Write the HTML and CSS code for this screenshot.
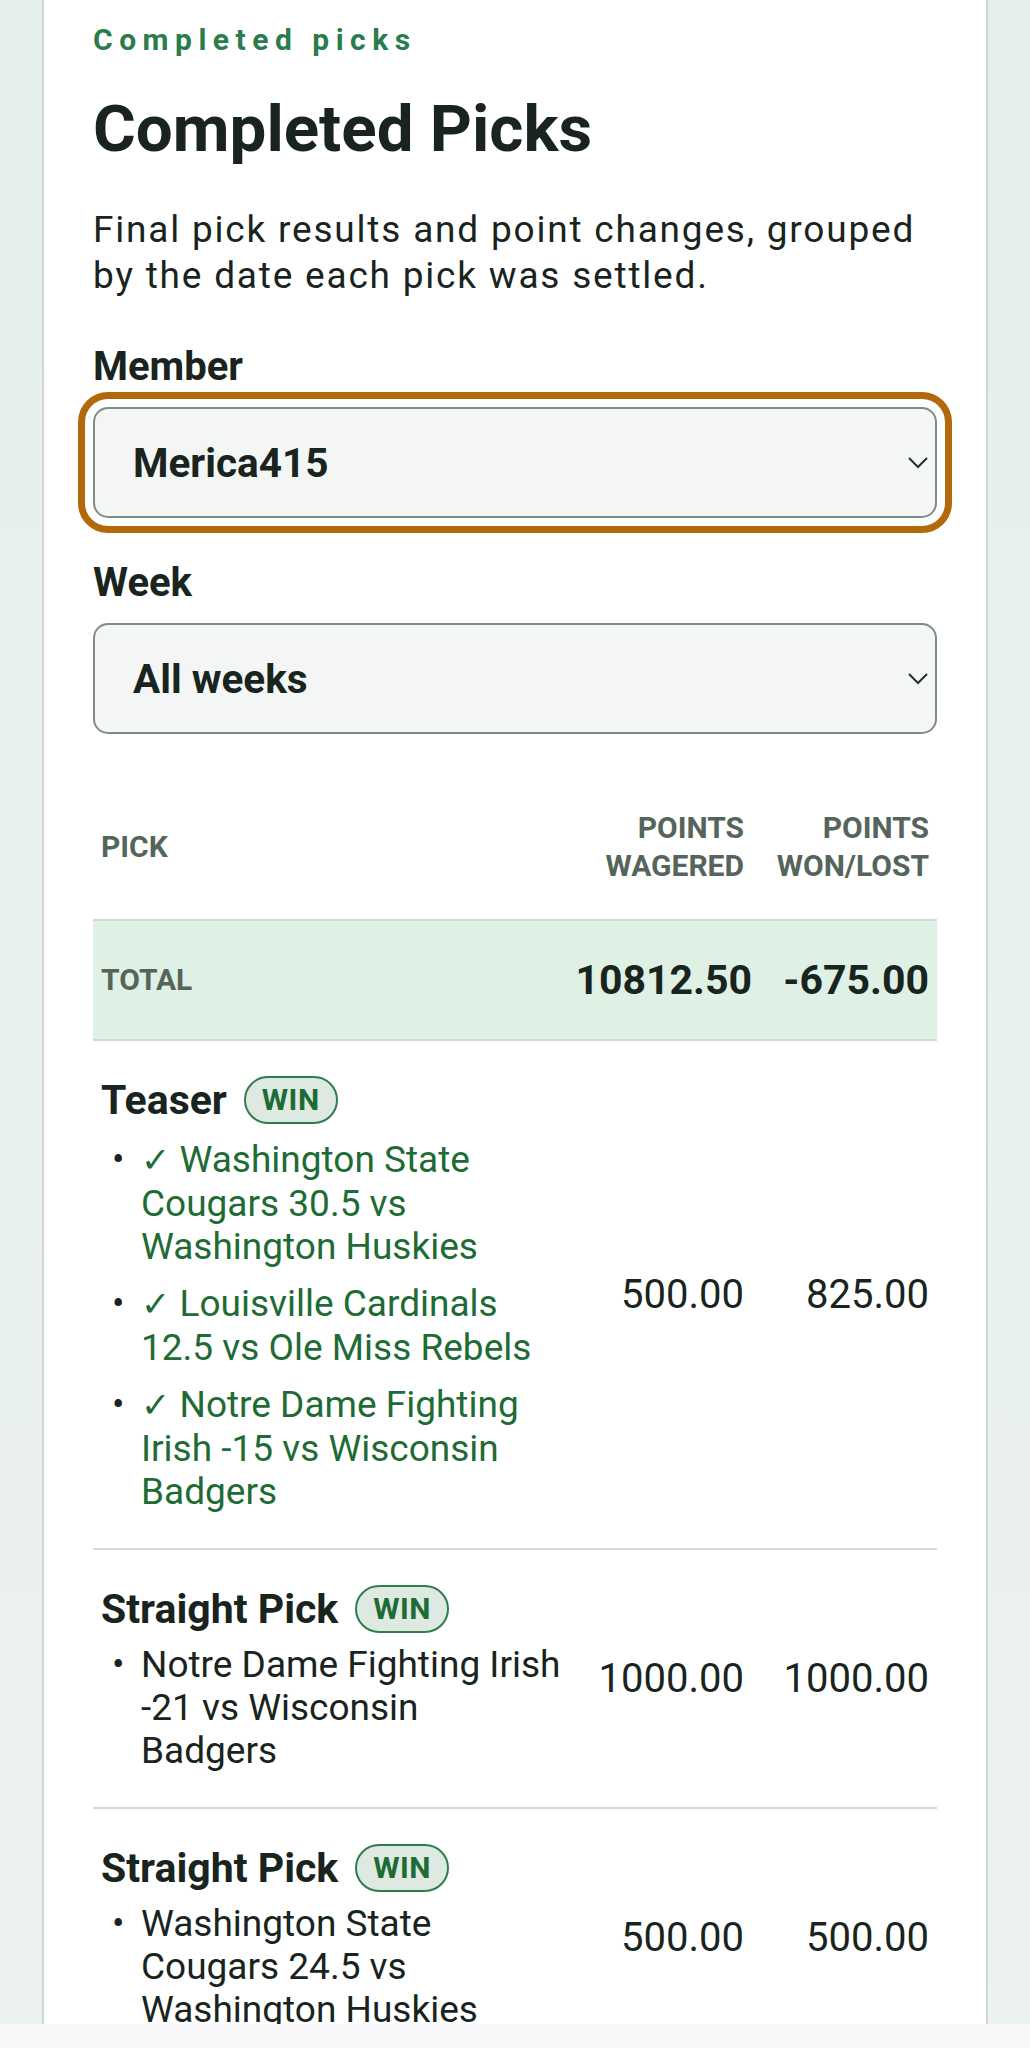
FILE: index.html
```html
<!DOCTYPE html>
<html lang="en">
<head>
  <meta charset="UTF-8" />
  <meta name="viewport" content="width=device-width, initial-scale=1.0"/>
  <title>Completed Picks</title>
  <link rel="stylesheet" href="styles.css">
</head>
<body>

  <main class="card">
    <p class="eyebrow">Completed picks</p>
    <h1>Completed Picks</h1>
    <p class="lede">Final pick results and point changes, grouped by the date each pick was settled.</p>

    <div class="field">
      <label for="member">Member</label>
      <div class="select-wrap">
        <select id="member" class="is-focused">
          <option>Merica415</option>
        </select>
        <svg class="chevron" width="20" height="12" viewBox="0 0 20 12"><path d="M1 1l9 9 9-9" fill="none" stroke="#27302b" stroke-width="2"/></svg>
      </div>
    </div>

    <div class="field">
      <label for="week">Week</label>
      <div class="select-wrap">
        <select id="week">
          <option>All weeks</option>
        </select>
        <svg class="chevron" width="20" height="12" viewBox="0 0 20 12"><path d="M1 1l9 9 9-9" fill="none" stroke="#27302b" stroke-width="2"/></svg>
      </div>
    </div>

    <table class="picks">
      <colgroup>
        <col class="col-pick">
        <col class="col-wager">
        <col class="col-result">
      </colgroup>
      <thead>
        <tr>
          <th class="pick-cell">Pick</th>
          <th class="num">Points<br>wagered</th>
          <th class="num last">Points<br>won/lost</th>
        </tr>
      </thead>
      <tbody>
        <tr class="total">
          <td class="pick-cell">Total</td>
          <td class="num wide">10812.50</td>
          <td class="num last">-675.00</td>
        </tr>
        <tr>
          <td class="pick-cell">
            <div class="pick-title">Teaser <span class="badge">WIN</span></div>
            <ul class="legs">
              <li class="won"><span><span class="check">✓</span> Washington State Cougars 30.5 vs Washington Huskies</span></li>
              <li class="won"><span><span class="check">✓</span> Louisville Cardinals 12.5 vs Ole Miss Rebels</span></li>
              <li class="won"><span><span class="check">✓</span> Notre Dame Fighting Irish -15 vs Wisconsin Badgers</span></li>
            </ul>
          </td>
          <td class="num">500.00</td>
          <td class="num last">825.00</td>
        </tr>
        <tr>
          <td class="pick-cell">
            <div class="pick-title">Straight Pick <span class="badge">WIN</span></div>
            <ul class="legs">
              <li><span>Notre Dame Fighting Irish -21 vs Wisconsin Badgers</span></li>
            </ul>
          </td>
          <td class="num">1000.00</td>
          <td class="num last">1000.00</td>
        </tr>
        <tr>
          <td class="pick-cell">
            <div class="pick-title">Straight Pick <span class="badge">WIN</span></div>
            <ul class="legs">
              <li><span>Washington State Cougars 24.5 vs Washington Huskies</span></li>
            </ul>
          </td>
          <td class="num">500.00</td>
          <td class="num last">500.00</td>
        </tr>
      </tbody>
    </table>
  </main>

  <div class="bottom-bar"></div>

</body>
</html>
```

FILE: styles.css
```css
:root {
  --text: #18241d;
  --muted: #56655c;
  --green: #2a7d4b;
  --leg-green: #1e6b36;
  --line: #d0dbd4;
  --field-bg: #f3f6f4;
  --field-border: #7f8d85;
  --focus: #b3680b;
  --total-bg: #dff0e5;
}

*, *::before, *::after { box-sizing: border-box; }

body {
  margin: 0;
  padding: 0 42px;
  background: linear-gradient(180deg, #e5efe9 0%, #edf3ef 100%);
  color: var(--text);
  font-family: Roboto, "Noto Sans", sans-serif;
}

.card {
  background: #fff;
  border: 2px solid #ccd8d1;
  border-top: none;
  padding: 22px 49px 60px;
}

.eyebrow {
  margin: 0;
  font-size: 30px;
  line-height: 36px;
  font-weight: 700;
  letter-spacing: 6.5px;
  color: var(--green);
}

h1 {
  margin: 32px 0 0;
  font-size: 65.5px;
  line-height: 77px;
  font-weight: 700;
}

.lede {
  margin: 40px 0 0;
  font-size: 37px;
  line-height: 46px;
  letter-spacing: 1.8px;
}

.field {
  margin-top: 45px;
}

.field + .field {
  margin-top: 42px;
}

label {
  display: block;
  font-size: 40px;
  line-height: 46px;
  font-weight: 700;
  margin-bottom: 17px;
}

.select-wrap {
  position: relative;
}

select {
  appearance: none;
  -webkit-appearance: none;
  display: block;
  width: 100%;
  height: 111px;
  padding: 0 60px 0 38px;
  border: 2px solid var(--field-border);
  border-radius: 15px;
  background: var(--field-bg);
  color: var(--text);
  font-family: inherit;
  font-size: 40.5px;
  font-weight: 700;
}

select.is-focused {
  outline: 7px solid var(--focus);
  outline-offset: 8px;
}

.chevron {
  position: absolute;
  right: 9px;
  top: 50%;
  margin-top: -6px;
  pointer-events: none;
}

.picks {
  width: 100%;
  margin-top: 40px;
  border-collapse: collapse;
  table-layout: fixed;
}

.col-pick { width: 468px; }
.col-wager { width: 192px; }

th, td {
  padding: 35px 9px 35px 9px;
  vertical-align: middle;
}

.pick-cell {
  padding-left: 8px;
  padding-right: 0;
}

.num { text-align: right; }
.num.last { padding-right: 8px; }

thead th {
  font-size: 30px;
  line-height: 37.5px;
  font-weight: 700;
  text-transform: uppercase;
  color: var(--muted);
  border-bottom: 2px solid var(--line);
}

thead th.pick-cell { text-align: left; }

tbody tr {
  border-bottom: 2px solid var(--line);
}

tbody td {
  font-size: 40px;
  line-height: 46px;
}

.total { background: var(--total-bg); }

.total td {
  font-size: 41px;
  line-height: 48px;
  font-weight: 700;
}

.total .pick-cell {
  font-size: 30px;
  text-transform: uppercase;
  color: var(--muted);
}

.total .wide {
  padding-left: 4px;
  padding-right: 1px;
}

.pick-title {
  display: flex;
  align-items: center;
  gap: 17px;
  font-size: 41px;
  font-weight: 700;
}

.badge {
  display: inline-flex;
  align-items: center;
  height: 48px;
  padding: 0 16px;
  border: 2px solid #2f7d4a;
  border-radius: 999px;
  background: #dde9e1;
  color: #1d6b35;
  font-size: 30px;
  letter-spacing: 0.5px;
  font-weight: 700;
}

.legs {
  list-style: none;
  margin: 10px 0 0;
  padding: 0;
}

.legs li {
  display: flex;
  font-size: 37px;
  line-height: 43px;
}

.legs li + li { margin-top: 10px; }

.legs li.won { padding-top: 4px; }

.legs li::before {
  content: "•";
  flex: none;
  width: 40px;
  padding-left: 11px;
  color: var(--text);
}

.legs li.won { color: var(--leg-green); }

.check {
  font-family: "DejaVu Sans", sans-serif;
  font-size: 35px;
}

.bottom-bar {
  position: fixed;
  left: 0;
  right: 0;
  bottom: 0;
  height: 24px;
  background: #f7f7fa;
}
```
